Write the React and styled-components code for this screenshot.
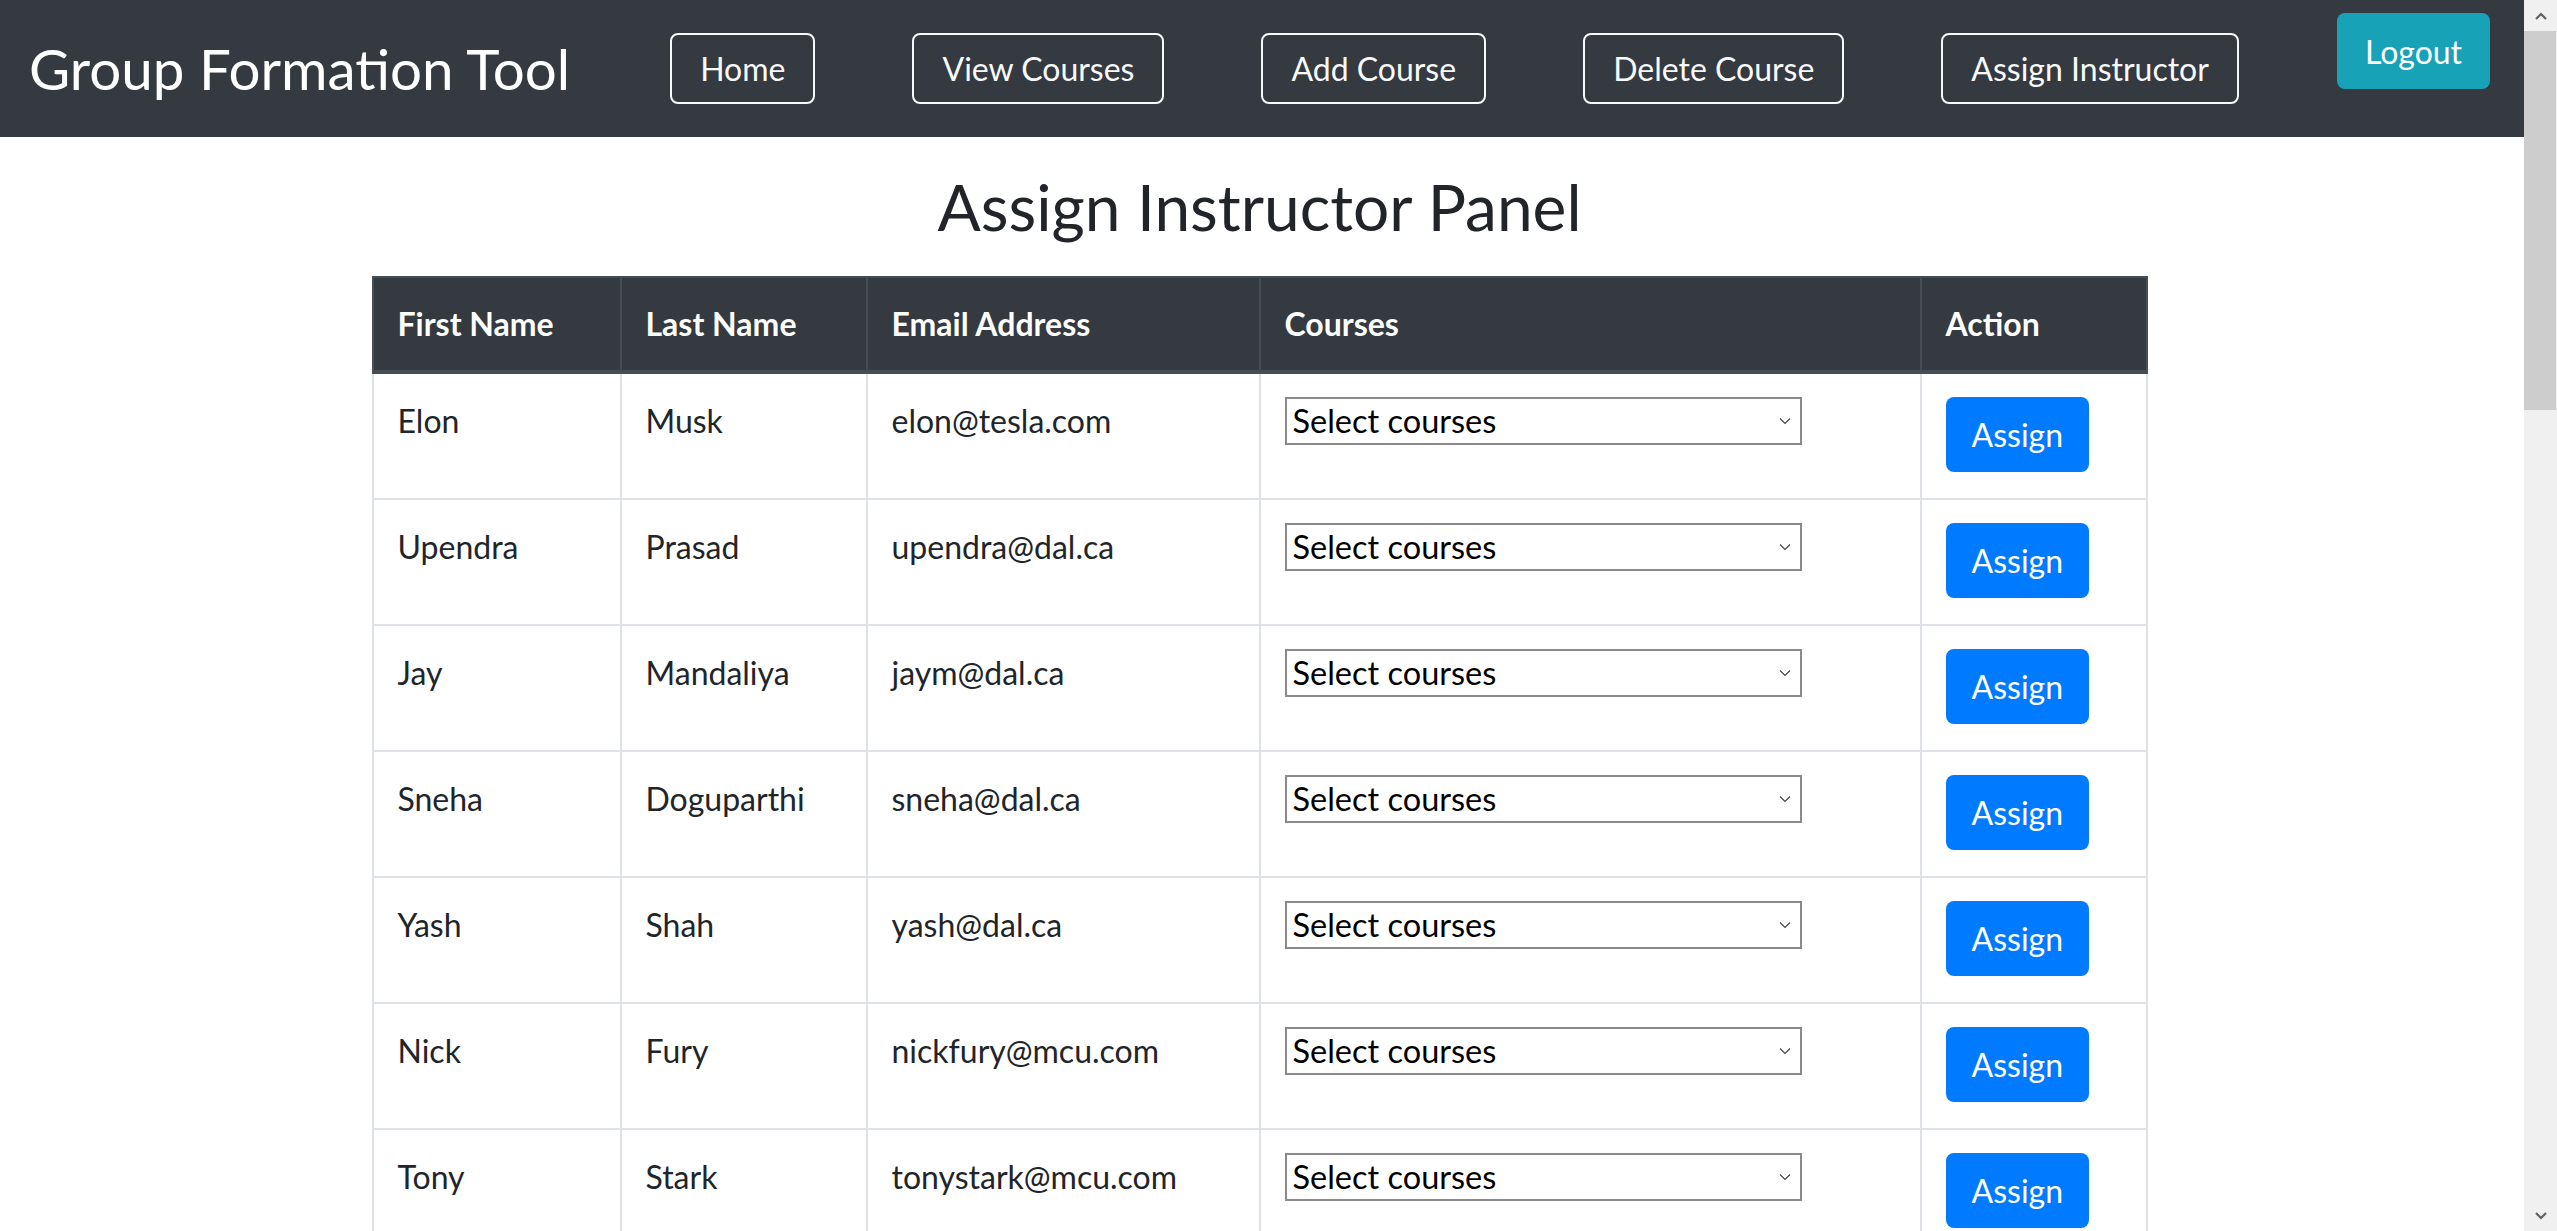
import React from "react";
import styled, { createGlobalStyle } from "styled-components";

const GlobalStyle = createGlobalStyle`
  * {
    box-sizing: border-box;
  }
  html,
  body {
    margin: 0;
    padding: 0;
    height: 100%;
    overflow: hidden;
  }
  body {
    font-family: Lato, "Open Sans", sans-serif;
    color: #212529;
    background-color: #fff;
  }
`;

const Shell = styled.div`
  display: flex;
  height: 100vh;
`;

const Page = styled.div`
  flex: 1;
  min-width: 0;
  overflow: hidden;
`;

const Navbar = styled.nav`
  display: flex;
  align-items: center;
  height: 137px;
  padding: 0 32px 0 29px;
  background-color: #343a40;
`;

const Brand = styled.a`
  font-size: 56.5px;
  line-height: 1;
  color: #fff;
  text-decoration: none;
  white-space: nowrap;
`;

const NavList = styled.div`
  display: flex;
  align-items: center;
  gap: 97px;
  margin-left: 100px;
`;

const NavButton = styled.button`
  display: flex;
  align-items: center;
  height: 71px;
  padding: 0 28px;
  font-family: inherit;
  font-size: 32px;
  color: #f8f9fa;
  background: transparent;
  border: 2px solid #f8f9fa;
  border-radius: 8px;
  white-space: nowrap;
  cursor: pointer;
`;

const LogoutButton = styled.button`
  align-self: flex-start;
  margin: 13px 0 0 98px;
  height: 76px;
  padding: 0 28px;
  font-family: inherit;
  font-size: 32px;
  color: #fff;
  background-color: #17a2b8;
  border: 0;
  border-radius: 8px;
  cursor: pointer;
`;

const Main = styled.main`
  padding-right: 5px;
`;

const Title = styled.h2`
  margin: 32px 0 30px;
  font-size: 64px;
  font-weight: 400;
  line-height: 1.2;
  text-align: center;
`;

const Table = styled.table`
  width: 1774px;
  margin: 0 auto;
  table-layout: fixed;
  border-collapse: collapse;
  font-size: 32px;
  line-height: 48px;
`;

const HeadCell = styled.th`
  height: 95px;
  padding: 0 24px;
  text-align: left;
  font-weight: 700;
  color: #fff;
  background-color: #343a40;
  border: 2px solid #454d55;
  border-bottom-width: 4px;
`;

const Cell = styled.td`
  padding: 23px 24px 26px;
  vertical-align: top;
  border: 2px solid #dee2e6;
  white-space: nowrap;
`;

const SelectWrap = styled.div`
  position: relative;
  width: 517px;
`;

const Select = styled.select`
  display: block;
  width: 100%;
  height: 48px;
  padding: 0 40px 0 6px;
  font-family: inherit;
  font-size: 32.5px;
  color: #000;
  background-color: #fff;
  border: 2px solid #8a8a8a;
  border-radius: 0;
  appearance: none;
`;

const SelectArrow = styled.svg`
  position: absolute;
  right: 11px;
  top: 20px;
  pointer-events: none;
`;

const AssignButton = styled.button`
  display: block;
  height: 75px;
  padding: 0 26px;
  font-family: inherit;
  font-size: 32px;
  color: #fff;
  background-color: #007bff;
  border: 0;
  border-radius: 8px;
  cursor: pointer;
`;

const Scrollbar = styled.div`
  display: flex;
  flex-direction: column;
  width: 33px;
  background-color: #f0f0f0;
`;

const ScrollArrow = styled.div`
  display: flex;
  align-items: center;
  justify-content: center;
  height: 31px;
`;

const ScrollThumb = styled.div`
  height: 379px;
  margin-right: 1px;
  background-color: #cdcdcd;
`;

const ScrollTrack = styled.div`
  flex: 1;
`;

const columns = [
  { label: "First Name", width: 248 },
  { label: "Last Name", width: 246 },
  { label: "Email Address", width: 393 },
  { label: "Courses", width: 661 },
  { label: "Action", width: 226 },
];

const instructors = [
  { first: "Elon", last: "Musk", email: "elon@tesla.com" },
  { first: "Upendra", last: "Prasad", email: "upendra@dal.ca" },
  { first: "Jay", last: "Mandaliya", email: "jaym@dal.ca" },
  { first: "Sneha", last: "Doguparthi", email: "sneha@dal.ca" },
  { first: "Yash", last: "Shah", email: "yash@dal.ca" },
  { first: "Nick", last: "Fury", email: "nickfury@mcu.com" },
  { first: "Tony", last: "Stark", email: "tonystark@mcu.com" },
];

const navItems = [
  "Home",
  "View Courses",
  "Add Course",
  "Delete Course",
  "Assign Instructor",
];

const Chevron = ({ up }) => (
  <svg width="12" height="8" viewBox="0 0 12 8">
    <path
      d={up ? "M1 7 L6 2 L11 7" : "M1 1 L6 6 L11 1"}
      fill="none"
      stroke="#606060"
      strokeWidth="2.2"
    />
  </svg>
);

const App = () => {
  return (
    <Shell>
      <GlobalStyle />
      <Page>
        <Navbar>
          <Brand href="#">Group Formation Tool</Brand>
          <NavList>
            {navItems.map((item) => (
              <NavButton key={item}>{item}</NavButton>
            ))}
          </NavList>
          <LogoutButton>Logout</LogoutButton>
        </Navbar>

        <Main>
          <Title>Assign Instructor Panel</Title>

          <Table>
            <colgroup>
              {columns.map((col) => (
                <col key={col.label} style={{ width: col.width }} />
              ))}
            </colgroup>
            <thead>
              <tr>
                {columns.map((col) => (
                  <HeadCell key={col.label}>{col.label}</HeadCell>
                ))}
              </tr>
            </thead>
            <tbody>
              {instructors.map((person) => (
                <tr key={person.email}>
                  <Cell>{person.first}</Cell>
                  <Cell>{person.last}</Cell>
                  <Cell>{person.email}</Cell>
                  <Cell>
                    <SelectWrap>
                      <Select defaultValue="">
                        <option value="">Select courses</option>
                      </Select>
                      <SelectArrow width="12" height="8" viewBox="0 0 12 8">
                        <path
                          d="M1 1.5 L6 6.5 L11 1.5"
                          fill="none"
                          stroke="#444"
                          strokeWidth="1.2"
                        />
                      </SelectArrow>
                    </SelectWrap>
                  </Cell>
                  <Cell>
                    <AssignButton>Assign</AssignButton>
                  </Cell>
                </tr>
              ))}
            </tbody>
          </Table>
        </Main>
      </Page>

      <Scrollbar>
        <ScrollArrow>
          <Chevron up />
        </ScrollArrow>
        <ScrollThumb />
        <ScrollTrack />
        <ScrollArrow>
          <Chevron />
        </ScrollArrow>
      </Scrollbar>
    </Shell>
  );
};

export default App;
